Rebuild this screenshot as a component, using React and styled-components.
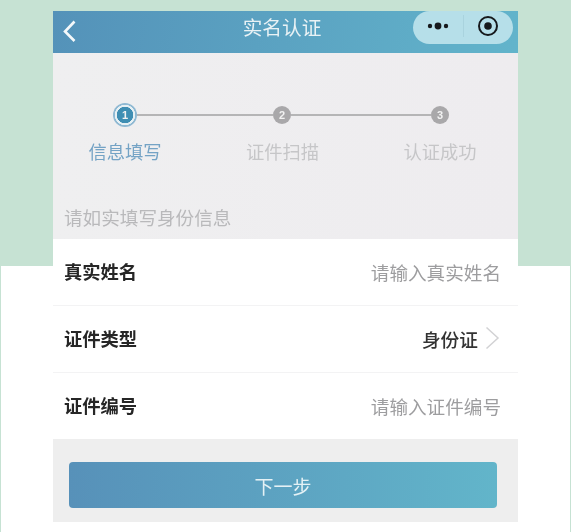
import styled, { createGlobalStyle } from "styled-components";

const GlobalStyle = createGlobalStyle`
  html, body {
    margin: 0;
    padding: 0;
    background: #fff;
  }
  body {
    font-family: "Liberation Sans", "Noto Sans CJK SC", sans-serif;
  }
`;

const Page = styled.div`
  width: 571px;
  height: 532px;
  box-sizing: border-box;
  padding: 11px 53px 10px;
  overflow: hidden;
  background:
    linear-gradient(#c6e2d3, #c6e2d3) 0 0 / 100% 266px no-repeat,
    linear-gradient(#c6e2d3, #c6e2d3) 0 0 / 1px 100% no-repeat,
    linear-gradient(#c6e2d3, #c6e2d3) 100% 0 / 1px 100% no-repeat,
    #fff;
`;

const Phone = styled.div`
  width: 465px;
  height: 511px;
  display: flex;
  flex-direction: column;
  background: #fff;
  filter: blur(0.4px);
`;

const Header = styled.div`
  height: 42px;
  flex: none;
  display: grid;
  grid-template-columns: 1fr auto 1fr;
  align-items: start;
  padding-right: 5px;
  background: linear-gradient(100deg, #5492b9, #62b4cb);
`;

const BackButton = styled.div`
  width: 16px;
  height: 24px;
  margin: 8px 0 0 8px;
`;

const Title = styled.div`
  margin-right: 2px;
  font-size: 19.7px;
  line-height: 34px;
  color: #e9f2f5;
`;

const Capsule = styled.div`
  justify-self: end;
  width: 100px;
  height: 33px;
  display: flex;
  align-items: center;
  border-radius: 17px;
  background: #b6dfe9;
`;

const CapsuleSlot = styled.div`
  flex: 1;
  height: 30px;
  margin-bottom: 3px;
  display: flex;
  align-items: center;
  justify-content: center;
  & + & {
    border-left: 1px solid #a9d3de;
    height: 22px;
  }
`;

const Body = styled.div`
  height: 186px;
  flex: none;
  display: flex;
  flex-direction: column;
  background: linear-gradient(90deg, #efeff0, #eeecef);
`;

const StepTrack = styled.div`
  height: 24px;
  margin-top: 50px;
  padding-left: 60px;
  display: flex;
  align-items: center;
`;

const StepDot = styled.div`
  width: ${(p) => (p.$active ? 24 : 18)}px;
  height: ${(p) => (p.$active ? 24 : 18)}px;
  flex: none;
  box-sizing: border-box;
  display: flex;
  align-items: center;
  justify-content: center;
  border-radius: 50%;
  color: #f2f2f2;
  font-family: "Liberation Sans", sans-serif;
  font-size: 11px;
  font-weight: 700;
  background: ${(p) =>
    p.$active
      ? "radial-gradient(circle, #3f8eb3 0 8px, #e6f0f4 8.5px 10px, #8fb9d3 10.5px)"
      : "#a9a8aa"};
`;

const StepLine = styled.div`
  width: ${(p) => p.$width}px;
  height: 2px;
  flex: none;
  background: #b5b5b6;
`;

const StepLabels = styled.div`
  display: grid;
  grid-template-columns: repeat(3, 100px);
  column-gap: 57.5px;
  margin-top: 13px;
  padding-left: 22px;
`;

const StepLabel = styled.div`
  font-size: 18.3px;
  line-height: 26px;
  text-align: center;
  color: ${(p) => (p.$active ? "#74a3c5" : "#c6c6c8")};
`;

const Hint = styled.div`
  margin-top: 40px;
  padding-left: 11px;
  font-size: 18.6px;
  line-height: 26px;
  color: #b9b9bb;
`;

const FormRow = styled.div`
  height: ${(p) => (p.$last ? 66 : 67)}px;
  flex: none;
  box-sizing: border-box;
  display: flex;
  align-items: center;
  justify-content: space-between;
  padding: 0 18px 2px 11px;
  background: #fff;
  border-bottom: ${(p) => (p.$last ? "none" : "1px solid #f3f3f4")};
`;

const RowLabel = styled.div`
  font-size: 18.3px;
  font-weight: 700;
  color: #262626;
`;

const Placeholder = styled.div`
  margin-right: -1px;
  font-size: 18.6px;
  color: #9d9d9f;
`;

const RowValue = styled.div`
  display: flex;
  align-items: center;
  gap: 7px;
  font-size: 18.7px;
  font-weight: 500;
  color: #333;
`;

const Footer = styled.div`
  flex: 1;
  padding: 23px 21px 14px 16px;
  background: #eeeeee;
`;

const NextButton = styled.div`
  height: 46px;
  display: flex;
  align-items: center;
  justify-content: center;
  border-radius: 4px;
  font-size: 19px;
  color: #e4f1f5;
  background: linear-gradient(90deg, #5791b9, #62b5ca);
`;

function App() {
  return (
    <>
      <GlobalStyle />
      <Page>
        <Phone>
          <Header>
            <BackButton>
              <svg width="16" height="24" viewBox="0 0 16 24" fill="none">
                <path d="M13.5 2.5 4 12.5l9.5 9.5" stroke="#f4f8fa" strokeWidth="2.6" />
              </svg>
            </BackButton>
            <Title>实名认证</Title>
            <Capsule>
              <CapsuleSlot>
                <svg width="22" height="10" viewBox="0 0 22 10" fill="#16191c">
                  <circle cx="3" cy="5" r="2.2" />
                  <circle cx="11" cy="5" r="3.4" />
                  <circle cx="19" cy="5" r="2.2" />
                </svg>
              </CapsuleSlot>
              <CapsuleSlot>
                <svg width="22" height="22" viewBox="0 0 22 22" fill="none">
                  <circle cx="11" cy="11" r="9" stroke="#16191c" strokeWidth="2" />
                  <circle cx="11" cy="11" r="3.8" fill="#16191c" />
                </svg>
              </CapsuleSlot>
            </Capsule>
          </Header>

          <Body>
            <StepTrack>
              <StepDot $active>1</StepDot>
              <StepLine $width={136} />
              <StepDot>2</StepDot>
              <StepLine $width={140} />
              <StepDot>3</StepDot>
            </StepTrack>
            <StepLabels>
              <StepLabel $active>信息填写</StepLabel>
              <StepLabel>证件扫描</StepLabel>
              <StepLabel>认证成功</StepLabel>
            </StepLabels>
            <Hint>请如实填写身份信息</Hint>
          </Body>

          <FormRow>
            <RowLabel>真实姓名</RowLabel>
            <Placeholder>请输入真实姓名</Placeholder>
          </FormRow>
          <FormRow>
            <RowLabel>证件类型</RowLabel>
            <RowValue>
              身份证
              <svg width="15" height="24" viewBox="0 0 15 24" fill="none">
                <path d="M1.5 1.5 13 12 1.5 22.5" stroke="#d2d2d4" strokeWidth="1.5" />
              </svg>
            </RowValue>
          </FormRow>
          <FormRow $last>
            <RowLabel>证件编号</RowLabel>
            <Placeholder>请输入证件编号</Placeholder>
          </FormRow>

          <Footer>
            <NextButton>下一步</NextButton>
          </Footer>
        </Phone>
      </Page>
    </>
  );
}

export default App;
